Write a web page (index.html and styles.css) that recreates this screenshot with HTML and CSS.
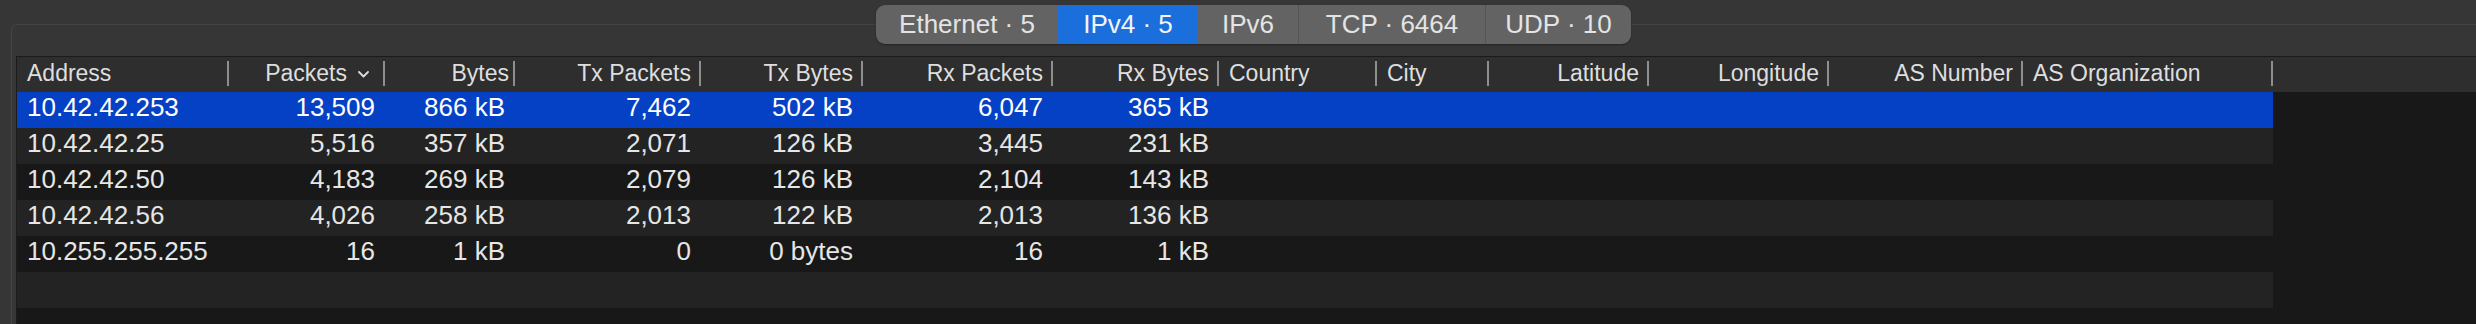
FILE: index.html
```html
<html>
  <head>
    <meta charset="utf-8" />
    <title>Endpoints</title>
    <link rel="stylesheet" href="styles.css">
  </head>
  <body>
    <div class="window">
      <div class="toolbar">
        <div class="tabs">
          <div class="tab tab-eth">Ethernet · 5</div>
          <div class="tab tab-ipv4 active">IPv4 · 5</div>
          <div class="tab tab-ipv6">IPv6</div>
          <div class="tab tab-tcp split">TCP · 6464</div>
          <div class="tab tab-udp split">UDP · 10</div>
        </div>
      </div>
      <div class="content">
        <div class="box">
          <div class="table">
            <div class="row head">
              <div class="th"><span class="label">Address</span><span class="sep"></span></div>
              <div class="th num"><span class="label sorted">Packets<svg class="chev" width="11" height="7" viewBox="0 0 11 7"><path d="M1 1 L5.5 5.5 L10 1" fill="none" stroke="#dedede" stroke-width="1.8" stroke-linecap="round" stroke-linejoin="round"/></svg></span><span class="sep"></span></div>
              <div class="th num"><span class="label tight">Bytes</span><span class="sep"></span></div>
              <div class="th num"><span class="label">Tx Packets</span><span class="sep"></span></div>
              <div class="th num"><span class="label">Tx Bytes</span><span class="sep"></span></div>
              <div class="th num"><span class="label">Rx Packets</span><span class="sep"></span></div>
              <div class="th num"><span class="label">Rx Bytes</span><span class="sep"></span></div>
              <div class="th"><span class="label">Country</span><span class="sep"></span></div>
              <div class="th"><span class="label">City</span><span class="sep"></span></div>
              <div class="th num"><span class="label">Latitude</span><span class="sep"></span></div>
              <div class="th num"><span class="label">Longitude</span><span class="sep"></span></div>
              <div class="th num"><span class="label">AS Number</span><span class="sep"></span></div>
              <div class="th"><span class="label">AS Organization</span><span class="sep"></span></div>
              <div class="th filler"></div>
            </div>

            <div class="row selected">
              <div class="td">10.42.42.253</div>
              <div class="td num">13,509</div>
              <div class="td num">866 kB</div>
              <div class="td num">7,462</div>
              <div class="td num">502 kB</div>
              <div class="td num">6,047</div>
              <div class="td num">365 kB</div>
              <div class="td"></div><div class="td"></div><div class="td"></div>
              <div class="td"></div><div class="td"></div><div class="td"></div>
              <div class="td filler"></div>
            </div>
            <div class="row alt">
              <div class="td">10.42.42.25</div>
              <div class="td num">5,516</div>
              <div class="td num">357 kB</div>
              <div class="td num">2,071</div>
              <div class="td num">126 kB</div>
              <div class="td num">3,445</div>
              <div class="td num">231 kB</div>
              <div class="td"></div><div class="td"></div><div class="td"></div>
              <div class="td"></div><div class="td"></div><div class="td"></div>
              <div class="td filler"></div>
            </div>
            <div class="row">
              <div class="td">10.42.42.50</div>
              <div class="td num">4,183</div>
              <div class="td num">269 kB</div>
              <div class="td num">2,079</div>
              <div class="td num">126 kB</div>
              <div class="td num">2,104</div>
              <div class="td num">143 kB</div>
              <div class="td"></div><div class="td"></div><div class="td"></div>
              <div class="td"></div><div class="td"></div><div class="td"></div>
              <div class="td filler"></div>
            </div>
            <div class="row alt">
              <div class="td">10.42.42.56</div>
              <div class="td num">4,026</div>
              <div class="td num">258 kB</div>
              <div class="td num">2,013</div>
              <div class="td num">122 kB</div>
              <div class="td num">2,013</div>
              <div class="td num">136 kB</div>
              <div class="td"></div><div class="td"></div><div class="td"></div>
              <div class="td"></div><div class="td"></div><div class="td"></div>
              <div class="td filler"></div>
            </div>
            <div class="row">
              <div class="td">10.255.255.255</div>
              <div class="td num">16</div>
              <div class="td num">1 kB</div>
              <div class="td num">0</div>
              <div class="td num">0 bytes</div>
              <div class="td num">16</div>
              <div class="td num">1 kB</div>
              <div class="td"></div><div class="td"></div><div class="td"></div>
              <div class="td"></div><div class="td"></div><div class="td"></div>
              <div class="td filler"></div>
            </div>
            <div class="row alt empty">
              <div class="td span"></div>
              <div class="td filler"></div>
            </div>
            <div class="row empty short">
              <div class="td span"></div>
              <div class="td filler"></div>
            </div>
          </div>
        </div>
      </div>
    </div>
  </body>
</html>
```

FILE: styles.css
```css
* {
  box-sizing: border-box;
  margin: 0;
  padding: 0;
  font-family: 'Liberation Sans', Arial, sans-serif;
}

body {
  width: 2476px;
  height: 324px;
  overflow: hidden;
  background: #363636;
}

.window {
  display: flex;
  flex-direction: column;
  height: 100%;
}

/* top bar with the segmented tabs */
.toolbar {
  height: 56px;
  flex: none;
  padding: 5px 0 0 876px;
  position: relative;
}

.toolbar::before {
  content: '';
  position: absolute;
  left: 11px;
  right: 0;
  top: 24px;
  bottom: 0;
  border-top: 1px solid #434343;
  border-left: 1px solid #454545;
  border-top-left-radius: 6px;
}

.tabs {
  position: relative;
  display: flex;
  height: 39px;
  width: 755px;
  background: #636363;
  border-radius: 9px;
  overflow: hidden;
  box-shadow: 0 1px 2px rgba(0, 0, 0, 0.35);
}

.tab {
  display: flex;
  align-items: center;
  justify-content: center;
  height: 100%;
  font-size: 26px;
  color: #e4e4e4;
  padding-bottom: 1px;
}

.tab.split {
  border-left: 1px solid #545454;
}

.tab.active {
  background: #1b6fdc;
  color: #f4f4f4;
}

.tab-eth { width: 182px; }
.tab-ipv4 { width: 140px; }
.tab-ipv6 { width: 100px; }
.tab-tcp { width: 187px; }
.tab-udp { width: 146px; }

/* table area */
.content {
  flex: 1;
  min-height: 0;
  display: flex;
  padding-left: 11px;
}

.box {
  flex: 1;
  display: flex;
  border-left: 1px solid #454545;
  padding-left: 4px;
}

.table {
  flex: 1;
  border-left: 1px solid #1b1b1b;
  border-top: 1px solid #1b1b1b;
  background: #181818;
  overflow: hidden;
}

.row {
  display: grid;
  grid-template-columns: 212px 156px 130px 186px 162px 190px 166px 158px 112px 160px 180px 194px 250px 1fr;
  height: 36px;
  background: #181818;
  color: #e6e6e6;
}

.row.alt {
  background: #232323;
}

.row.selected {
  background: #0541c5;
  color: #ffffff;
}

.row.empty {
  grid-template-columns: 2256px 1fr;
}

.row.short {
  height: 16px;
}

.row .filler {
  background: #181818;
}

.head {
  height: 35px;
  background: #2e2e2e;
  color: #dedede;
}

.head .filler {
  background: #2e2e2e;
}

.th {
  display: flex;
  align-items: center;
  padding: 0 0 2px 10px;
  font-size: 23px;
}

.th .label {
  flex: 1;
  line-height: 33px;
  white-space: nowrap;
}

.th.num .label {
  text-align: right;
  padding-right: 8px;
}

.th .label.tight {
  padding-right: 4px;
}

.th .label.sorted {
  padding-right: 14px;
}

.chev {
  margin-left: 11px;
  vertical-align: 3px;
}

.sep {
  flex: none;
  width: 2px;
  height: 25px;
  background: #8e8e8e;
}

.td {
  padding: 0 10px;
  font-size: 26px;
  line-height: 31px;
  white-space: nowrap;
}

.td.num {
  text-align: right;
}
```
